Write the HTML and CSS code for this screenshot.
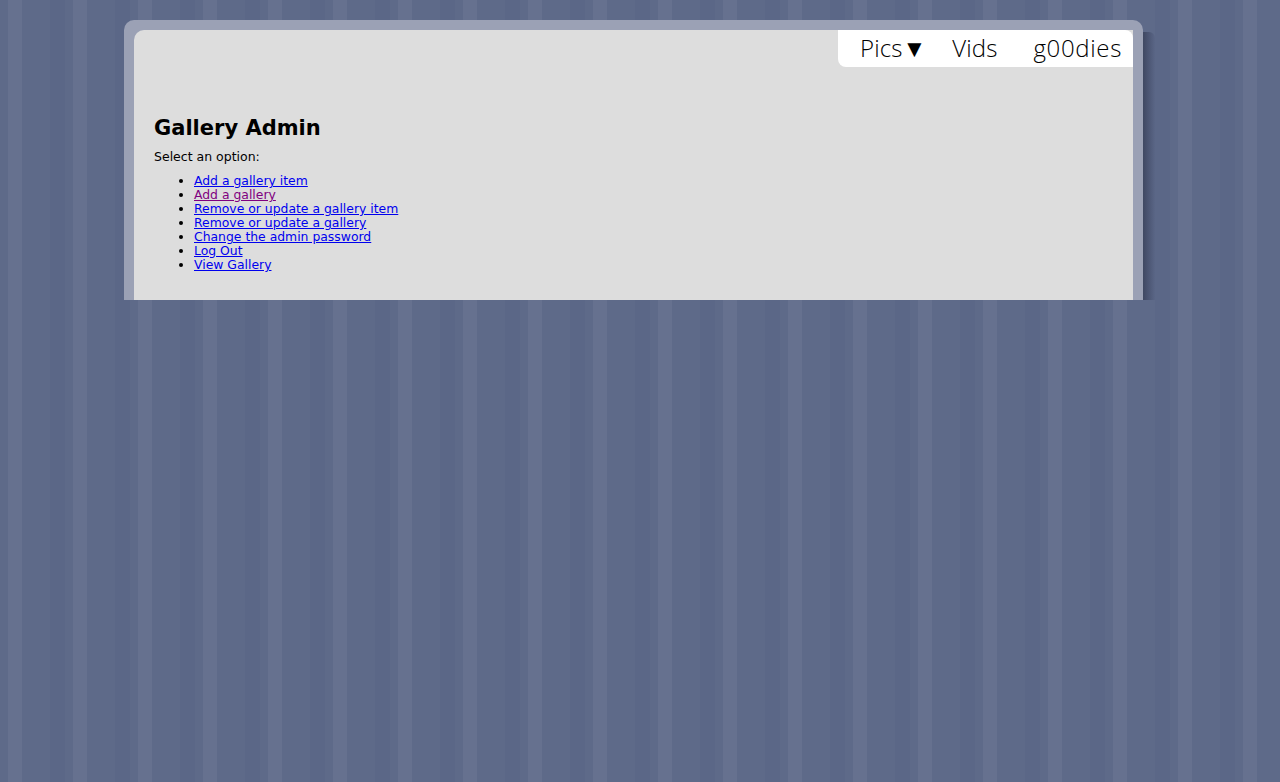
FILE: index.html
```html
<!DOCTYPE html>
<html>
<head>
<meta charset="utf-8">
<title>Gallery Admin</title>
<link rel="stylesheet" href="styles.css">
</head>
<body>
<div class="frame">
  <div class="panel">
    <div class="topbar">
      <nav class="nav">
        <a class="nav-item pics" href="#">Pics&#9660;</a>
        <a class="nav-item vids" href="#">Vids</a>
        <a class="nav-item goodies" href="#">g00dies</a>
      </nav>
    </div>
    <div class="content">
      <h1 class="title">Gallery Admin</h1>
      <p class="intro">Select an option:</p>
      <ul class="options">
        <li><a href="#">Add a gallery item</a></li>
        <li><a class="visited" href="#">Add a gallery</a></li>
        <li><a href="#">Remove or update a gallery item</a></li>
        <li><a href="#">Remove or update a gallery</a></li>
        <li><a href="#">Change the admin password</a></li>
        <li><a href="#">Log Out</a></li>
        <li><a href="#">View Gallery</a></li>
      </ul>
    </div>
  </div>
</div>
</body>
</html>
```
FILE: styles.css
```css
html, body {
  margin: 0;
  padding: 0;
}
body {
  height: 782px;
  background-color: #5e6a89;
  background-image: repeating-linear-gradient(90deg,
    #5e6a89 0px, #5e6a89 8px,
    #66718f 8px, #66718f 22px,
    #5e6a89 22px, #5e6a89 50px,
    #5b6787 50px, #5b6787 65px);
  font-family: "DejaVu Sans", Verdana, sans-serif;
  overflow: hidden;
}
.frame {
  position: relative;
  margin: 20px 0 0 124px;
  width: 999px;
  height: 270px;
  padding: 10px 10px 0 10px;
  background: #9ba1b5;
  border-radius: 10px 10px 0 0;
}
.frame::after {
  content: "";
  position: absolute;
  top: 12px;
  right: -12px;
  width: 12px;
  bottom: 0;
  background: linear-gradient(90deg, #3f4862 0%, #4d5775 50%, #5a6686 100%);
  border-radius: 0 6px 0 0;
}
.panel {
  height: 270px;
  background: #dddddd;
  border-radius: 10px 0 0 0;
  display: flex;
  flex-direction: column;
}
.topbar {
  display: flex;
  justify-content: flex-end;
}
.nav {
  width: 295px;
  height: 37px;
  background: #ffffff;
  border-radius: 0 8px 0 8px;
  display: flex;
  align-items: center;
  box-sizing: border-box;
  padding: 0 0 2px 22px;
}
.nav-item {
  font-family: "Open Sans", "Liberation Sans", sans-serif;
  font-weight: 300;
  font-size: 24px;
  color: #000000;
  text-decoration: none;
  letter-spacing: 0.1px;
}
.vids {
  margin-left: 26px;
}
.goodies {
  margin-left: 36px;
  letter-spacing: 0.65px;
}
.content {
  padding: 48px 20px 0 20px;
}
.title {
  margin: 0;
  font-size: 21px;
  font-weight: bold;
  line-height: 26px;
  color: #000;
}
.intro {
  margin: 8px 0 0 0;
  font-size: 12.5px;
  line-height: 16px;
  color: #000;
}
.options {
  margin: 9px 0 0 0;
  padding-left: 40px;
  font-size: 12.4px;
  line-height: 14px;
}
.options a {
  color: #0000ee;
}
.options a.visited {
  color: #800080;
}
```
